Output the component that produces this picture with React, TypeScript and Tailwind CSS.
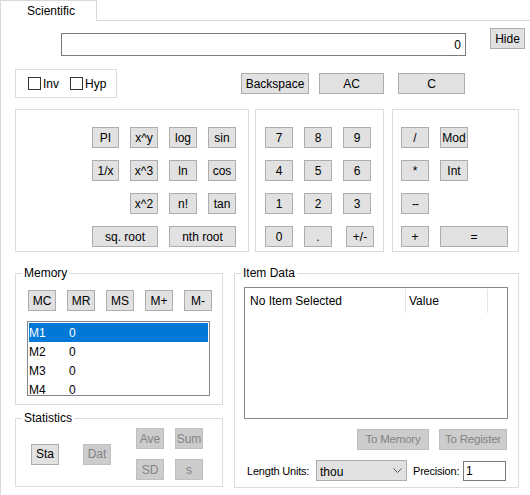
import React from 'react';

/* ---------------- small WinForms-ish parts ---------------- */
interface BtnProps {
  children?: React.ReactNode;
  className?: string;
  disabled?: boolean;
}

const Btn = ({ children, className = '', disabled = false }: BtnProps) => (
  <button
    type="button"
    disabled={disabled}
    className={`flex h-[21px] shrink-0 items-center justify-center whitespace-nowrap border leading-none ${
      disabled
        ? 'border-[#bfbfbf] bg-[#cccccc] text-[#838383]'
        : 'border-[#adadad] bg-[#e1e1e1] text-black'
    } ${className}`}
  >
    {children}
  </button>
);

const Check = ({ label, className = '' }: { label: string; className?: string }) => (
  <label className={`flex items-center gap-[2px] ${className}`}>
    <span className="h-[13px] w-[13px] border border-[#333333] bg-white" />
    <span>{label}</span>
  </label>
);

interface GroupProps {
  title: string;
  className?: string;
  children?: React.ReactNode;
}

const Group = ({ title, className = '', children }: GroupProps) => (
  <fieldset className={`shrink-0 border border-[#dcdcdc] ${className}`}>
    <legend className="ml-[6px] px-[2px] leading-[14px]">{title}</legend>
    {children}
  </fieldset>
);

const memory = [
  { name: 'M1', value: '0' },
  { name: 'M2', value: '0' },
  { name: 'M3', value: '0' },
  { name: 'M4', value: '0' },
];

export default function App() {
  return (
    <div className="h-[495px] w-[530px] overflow-hidden bg-white font-['Liberation_Sans',Arial,sans-serif] text-[12px] leading-[14px] text-black">
      {/* Tab strip */}
      <div className="flex h-[21px]">
        <div className="h-[21px] w-[97px] border-l border-r border-t border-[#d9d9d9] pl-[26px] pt-[3px]">
          Scientific
        </div>
        <div className="flex-1 border-b border-[#d9d9d9]" />
      </div>

      {/* Tab page */}
      <div className="h-[474px] border-l border-[#d9d9d9]">
        {/* Display row */}
        <div className="flex items-start pt-[7px]">
          <div className="ml-[60px] mt-[5px] flex h-[23px] w-[405px] items-center justify-end border border-[#7a7a7a] pr-[4px]">
            0
          </div>
          <Btn className="ml-[24px] w-[35px]">Hide</Btn>
        </div>

        {/* Inv / Hyp + clear buttons */}
        <div className="mt-[13px] flex items-start">
          <div className="ml-[14px] flex h-[29px] w-[102px] items-center border border-[#dcdcdc] pl-[12px]">
            <Check label="Inv" className="w-[42px]" />
            <Check label="Hyp" />
          </div>
          <Btn className="ml-[124px] mt-[4px] w-[68px]">Backspace</Btn>
          <Btn className="ml-[10px] mt-[4px] w-[65px]">AC</Btn>
          <Btn className="ml-[14px] mt-[4px] w-[67px]">C</Btn>
        </div>

        {/* Keypads */}
        <div className="mt-[11px] flex">
          <div className="ml-[14px] h-[143px] w-[234px] border border-[#dcdcdc] pl-[76px] pt-[17px]">
            <div className="grid grid-cols-[27px_28px_28px_28px] gap-x-[11px] gap-y-[12px]">
              <Btn>PI</Btn>
              <Btn>x^y</Btn>
              <Btn>log</Btn>
              <Btn>sin</Btn>
              <Btn>1/x</Btn>
              <Btn>x^3</Btn>
              <Btn>ln</Btn>
              <Btn>cos</Btn>
              <div />
              <Btn>x^2</Btn>
              <Btn>n!</Btn>
              <Btn>tan</Btn>
              <Btn className="col-span-2">sq. root</Btn>
              <Btn className="col-span-2">nth root</Btn>
            </div>
          </div>

          <div className="ml-[6px] h-[143px] w-[129px] border border-[#dcdcdc] pl-[9px] pt-[17px]">
            <div className="grid grid-cols-[28px_28px_28px] gap-x-[11px] gap-y-[12px]">
              {['7', '8', '9', '4', '5', '6', '1', '2', '3', '0', '.'].map((k) => (
                <Btn key={k}>{k}</Btn>
              ))}
              <Btn className="ml-[3px] w-[28px]">+/-</Btn>
            </div>
          </div>

          <div className="ml-[8px] flex h-[143px] w-[127px] flex-col gap-[12px] border border-[#dcdcdc] pl-[8px] pt-[17px]">
            <div className="flex gap-[11px]">
              <Btn className="w-[28px]">/</Btn>
              <Btn className="w-[28px]">Mod</Btn>
            </div>
            <div className="flex gap-[11px]">
              <Btn className="w-[28px]">*</Btn>
              <Btn className="w-[28px]">Int</Btn>
            </div>
            <div className="flex gap-[11px]">
              <Btn className="w-[28px] tracking-[-1px]">--</Btn>
            </div>
            <div className="flex gap-[11px]">
              <Btn className="w-[28px]">+</Btn>
              <Btn className="w-[68px]">=</Btn>
            </div>
          </div>
        </div>

        {/* Lower half */}
        <div className="mt-[14px] flex items-start">
          <div className="ml-[14px] flex flex-col">
            <Group title="Memory" className="h-[139px] w-[208px]">
              <div className="pl-[11px] pt-[10px]">
                <div className="flex gap-[11px] pl-[1px]">
                  {['MC', 'MR', 'MS', 'M+', 'M-'].map((m) => (
                    <Btn key={m} className="w-[28px]">
                      {m}
                    </Btn>
                  ))}
                </div>
                <div className="mt-[10px] h-[75px] w-[183px] overflow-hidden border border-[#828790] p-[1px]">
                  {memory.map((row, i) => (
                    <div
                      key={row.name}
                      className={`flex h-[19px] items-center ${
                        i === 0 ? 'bg-[#0078d7] text-white' : ''
                      }`}
                    >
                      <span className="w-[40px]">{row.name}</span>
                      <span>{row.value}</span>
                    </div>
                  ))}
                </div>
              </div>
            </Group>

            <Group title="Statistics" className="mt-[6px] h-[76px] w-[208px]">
              <div className="flex items-center pl-[15px] pt-[3px]">
                <Btn className="w-[28px]">Sta</Btn>
                <Btn disabled className="ml-[24px] w-[28px]">
                  Dat
                </Btn>
                <div className="ml-[25px] grid grid-cols-[28px_28px] gap-x-[11px] gap-y-[10px]">
                  <Btn disabled>Ave</Btn>
                  <Btn disabled>Sum</Btn>
                  <Btn disabled>SD</Btn>
                  <Btn disabled>s</Btn>
                </div>
              </div>
            </Group>
          </div>

          <Group title="Item Data" className="ml-[11px] h-[222px] w-[285px]">
            <div className="pl-[9px] pt-[7px]">
              <div className="h-[132px] w-[264px] border border-[#828790]">
                <div className="flex h-[25px] items-center">
                  <div className="flex h-[24px] w-[161px] items-center border-r border-[#e5e5e5] pl-[5px]">
                    No Item Selected
                  </div>
                  <div className="flex h-[24px] w-[82px] items-center border-r border-[#e5e5e5] pl-[3px]">
                    Value
                  </div>
                </div>
              </div>

              <div className="mt-[10px] flex w-[263px] justify-end gap-[10px]">
                <Btn disabled className="w-[72px] text-[11.5px] tracking-[-0.2px]">
                  To Memory
                </Btn>
                <Btn disabled className="w-[68px] text-[11.5px] tracking-[-0.2px]">
                  To Register
                </Btn>
              </div>

              <div className="mt-[10px] flex items-center pl-[3px]">
                <span className="w-[63px] shrink-0 whitespace-nowrap text-[11px] tracking-[-0.2px]">
                  Length Units:
                </span>
                <div className="ml-[6px] flex h-[21px] w-[91px] shrink-0 items-center justify-between border border-[#adadad] bg-[#e1e1e1] pl-[3px] pr-[4px]">
                  <span className="pt-[2px]">thou</span>
                  <svg width="9" height="5" viewBox="0 0 9 5" fill="none">
                    <path d="M0.5 0.5 L4.5 4.5 L8.5 0.5" stroke="#555555" strokeWidth="1" />
                  </svg>
                </div>
                <span className="ml-[6px] w-[45px] shrink-0 whitespace-nowrap text-[11px] tracking-[-0.2px]">
                  Precision:
                </span>
                <div className="ml-[5px] flex h-[20px] w-[43px] shrink-0 items-center border border-[#7a7a7a] pl-[2px]">
                  1
                </div>
              </div>
            </div>
          </Group>
        </div>
      </div>
    </div>
  );
}
